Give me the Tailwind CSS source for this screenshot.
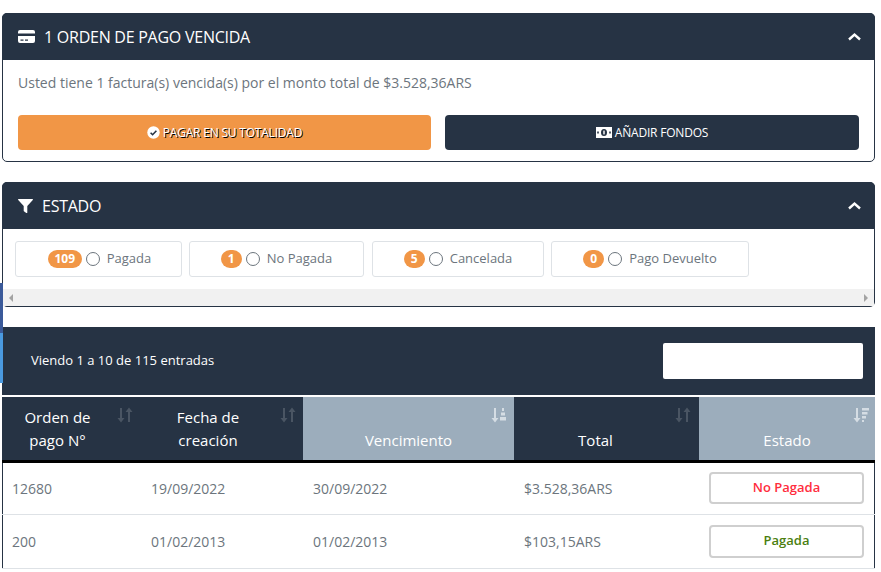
<!DOCTYPE html>
<html lang="es">
  <head>
    <meta charset="UTF-8" />
    <title>Facturas</title>
    <script src="https://cdn.jsdelivr.net/npm/@tailwindcss/browser@4"></script>
  </head>
  <body class="relative h-[572px] overflow-hidden bg-white font-['Open_Sans',sans-serif] text-[#6c757d]">
    <!-- tira lateral -->
    <div class="absolute left-0 top-[283px] h-[50px] w-[3px] bg-[#3b5a9a]"></div>
    <div class="absolute left-0 top-[333px] h-[50px] w-[3px] bg-[#4a9ae0]"></div>

    <div class="pl-[2px] pr-[6px] pt-[13px]">
      <!-- orden vencida -->
      <section class="h-[149px] rounded-[5px] border border-[#263344]">
        <header class="-m-px flex h-[47px] items-center rounded-t-[5px] bg-[#263344] pl-[16px] pr-[14px] text-white">
          <svg class="h-[15px] w-[17px]" viewBox="0 0 17 15" fill="#fff"><path d="M2 1h13a2 2 0 0 1 2 2v1.5H0V3a2 2 0 0 1 2-2zM0 7h17v5a2 2 0 0 1-2 2H2a2 2 0 0 1-2-2zm2.5 3.5v1.3h3v-1.3zm4.5 0v1.3h3v-1.3z"/></svg>
          <h2 class="ml-[9px] text-[16px] leading-none tracking-[-0.25px]">1 ORDEN DE PAGO VENCIDA</h2>
          <svg class="ml-auto h-[9px] w-[13px]" viewBox="0 0 13 9" fill="none" stroke="#fff" stroke-width="2.4"><path d="M1 7.5l5.5-5 5.5 5"/></svg>
        </header>
        <div class="px-[15px] pt-[14px]">
          <p class="text-[14px] leading-[19px]">Usted tiene 1 factura(s) vencida(s) por el monto total de $3.528,36ARS</p>
          <div class="mt-[23px] flex gap-[14px]">
            <button class="flex h-[35px] w-[413px] items-center justify-center gap-[3px] rounded-[4px] bg-[#f19646] text-[12px] tracking-[-0.2px] text-white [text-shadow:1px_1px_0_#000]">
              <svg class="h-[13px] w-[13px]" viewBox="0 0 13 13"><circle cx="6.5" cy="6.5" r="6.2" fill="#fff"/><path d="M3.6 6.7l2 2 3.8-3.9" fill="none" stroke="#263344" stroke-width="1.6"/></svg>
              PAGAR EN SU TOTALIDAD
            </button>
            <button class="flex h-[35px] w-[414px] items-center justify-center gap-[3px] rounded-[4px] bg-[#263344] text-[12px] tracking-[-0.2px] text-white">
              <svg class="h-[11px] w-[16px]" viewBox="0 0 16 11"><rect width="16" height="11" fill="#fff"/><ellipse cx="8" cy="5.5" rx="3" ry="3.6" fill="#263344"/><rect x="7.3" y="3.6" width="1.4" height="3.8" fill="#fff"/><path d="M1.2 4.5h1.6v2H1.2zM13.2 4.5h1.6v2h-1.6z" fill="#263344"/></svg>
              AÑADIR FONDOS
            </button>
          </div>
        </div>
      </section>

      <!-- estado -->
      <section class="mt-[20px] h-[125px] rounded-[5px] border border-[#263344]">
        <header class="-m-px flex h-[47px] items-center rounded-t-[5px] bg-[#263344] pl-[16px] pr-[14px] text-white">
          <svg class="h-[14px] w-[15px]" viewBox="0 0 15 14" fill="#fff"><path d="M.6 0h13.8c.5 0 .8.6.4 1L9.3 7v6.4c0 .5-.6.8-1 .5L5.9 12.200a.6.6 0 0 1-.2-.5V7L.2 1C-.2.6.1 0 .6 0z"/></svg>
          <h2 class="ml-[9px] text-[16px] leading-none tracking-[-0.25px]">ESTADO</h2>
          <svg class="ml-auto h-[9px] w-[13px]" viewBox="0 0 13 9" fill="none" stroke="#fff" stroke-width="2.4"><path d="M1 7.5l5.500-5 5.500 5"/></svg>
        </header>
        <div class="flex pl-[12px] pt-[13px]">
          <label class="flex h-[36px] w-[167px] items-center justify-center rounded-[3px] border border-[#dee2e6] pl-[2px] text-[13px]">
            <span class="flex h-[18px] w-[34px] items-center justify-center rounded-full bg-[#f19646] text-[12px] font-bold text-white">109</span>
            <span class="ml-[4px] mr-[7px] h-[14px] w-[14px] rounded-full border-[1.5px] border-[#6c757d]"></span>
            Pagada
          </label>
          <label class="ml-[7px] flex h-[36px] w-[175px] items-center justify-center rounded-[3px] border border-[#dee2e6] text-[13px]">
            <span class="flex h-[18px] w-[21px] items-center justify-center rounded-full bg-[#f19646] text-[12px] font-bold text-white">1</span>
            <span class="ml-[4px] mr-[7px] h-[14px] w-[14px] rounded-full border-[1.5px] border-[#6c757d]"></span>
            No Pagada
          </label>
          <label class="ml-[8px] flex h-[36px] w-[172px] items-center justify-center rounded-[3px] border border-[#dee2e6] text-[13px]">
            <span class="flex h-[18px] w-[21px] items-center justify-center rounded-full bg-[#f19646] text-[12px] font-bold text-white">5</span>
            <span class="ml-[4px] mr-[7px] h-[14px] w-[14px] rounded-full border-[1.5px] border-[#6c757d]"></span>
            Cancelada
          </label>
          <label class="ml-[7px] flex h-[36px] w-[198px] items-center justify-center rounded-[3px] border border-[#dee2e6] text-[13px]">
            <span class="flex h-[18px] w-[21px] items-center justify-center rounded-full bg-[#f19646] text-[12px] font-bold text-white">0</span>
            <span class="ml-[4px] mr-[7px] h-[14px] w-[14px] rounded-full border-[1.5px] border-[#6c757d]"></span>
            Pago Devuelto
          </label>
        </div>
        <div class="mt-[12px] flex h-[17px] items-center justify-between bg-[#f1f1f1] px-[6px]">
          <span class="h-0 w-0 border-y-[4px] border-r-[4px] border-y-transparent border-r-[#a3a3a3]"></span>
          <span class="h-0 w-0 border-y-[4px] border-l-[4px] border-y-transparent border-l-[#a3a3a3]"></span>
        </div>
      </section>

      <!-- barra tabla -->
      <div class="mt-[20px] flex h-[68px] items-center justify-between bg-[#263344] pl-[29px] pr-[12px] text-[13px] text-white">
        <span>Viendo 1 a 10 de 115 entradas</span>
        <input class="h-[36px] w-[200px] rounded-[2px] bg-white" />
      </div>

      <!-- tabla -->
      <div class="mt-[2px] border-x border-[#263344]">
        <table class="-mx-px w-[873px] table-fixed border-collapse text-[14px]">
          <colgroup>
            <col class="w-[139px]" /><col class="w-[162px]" /><col class="w-[211px]" /><col class="w-[185px]" /><col class="w-[176px]" />
          </colgroup>
          <thead>
            <tr class="h-[64px] border-b-[3px] border-black text-center align-bottom text-white">
              <th class="relative bg-[#263344] pb-[8px] pl-[6px] pr-[34px] text-[15px] font-normal leading-[23px]">
                Orden de pago N°
                <svg class="absolute right-[8px] top-[10px] h-[16px] w-[16px]" viewBox="0 0 16 16" fill="#4a5563"><path d="M5 1v10h2.500L4 15.500.5 11H3V1zM11 15V5H8.500L12 .5 15.500 5H13v10z"/></svg>
              </th>
              <th class="relative bg-[#263344] pb-[8px] pl-[6px] pr-[34px] text-[15px] font-normal leading-[23px]">
                Fecha de creación
                <svg class="absolute right-[7px] top-[10px] h-[16px] w-[16px]" viewBox="0 0 16 16" fill="#4a5563"><path d="M5 1v10h2.500L4 15.500.5 11H3V1zM11 15V5H8.500L12 .5 15.500 5H13v10z"/></svg>
              </th>
              <th class="relative bg-[#9cadbc] pb-[8px] text-[15px] font-normal leading-[23px]">
                Vencimiento
                <svg class="absolute right-[7px] top-[10px] h-[16px] w-[16px]" viewBox="0 0 16 16" fill="#d5dde4"><path d="M5 1v10h2.500L4 15.500.5 11H3V1zM11 1h2v3h-2zM10 5.500h4v3h-4zM9 10h6v3.500H9z"/></svg>
              </th>
              <th class="relative bg-[#263344] pb-[8px] pr-[22px] text-[15px] font-normal leading-[23px]">
                Total
                <svg class="absolute right-[8px] top-[10px] h-[16px] w-[16px]" viewBox="0 0 16 16" fill="#4a5563"><path d="M5 1v10h2.500L4 15.500.5 11H3V1zM11 15V5H8.500L12 .5 15.500 5H13v10z"/></svg>
              </th>
              <th class="relative bg-[#9cadbc] pb-[8px] text-[15px] font-normal leading-[23px]">
                Estado
                <svg class="absolute right-[6px] top-[10px] h-[16px] w-[16px]" viewBox="0 0 16 16" fill="#d5dde4"><path d="M5 1v10h2.500L4 15.500.5 11H3V1zM9 1h7v2.500H9zM9 5h5.500v2.500H9zM9 9h4v2.500H9zM9 13h2v2H9z"/></svg>
              </th>
            </tr>
          </thead>
          <tbody>
            <tr class="h-[53px] border-b border-[#dee2e6]">
              <td class="pl-[10px]">12680</td>
              <td class="pl-[10px]">19/09/2022</td>
              <td class="pl-[10px]">30/09/2022</td>
              <td class="pl-[10px]">$3.528,36ARS</td>
              <td class="pl-[10px]"><span class="flex h-[32px] w-[155px] items-center justify-center rounded-[4px] border-2 border-[#cfcfcf] text-[13px] font-semibold text-[#ff2d3d]">No Pagada</span></td>
            </tr>
            <tr class="h-[54px] border-b border-[#dee2e6]">
              <td class="pl-[10px]">200</td>
              <td class="pl-[10px]">01/02/2013</td>
              <td class="pl-[10px]">01/02/2013</td>
              <td class="pl-[10px]">$103,15ARS</td>
              <td class="pl-[10px]"><span class="flex h-[33px] w-[155px] items-center justify-center rounded-[4px] border-2 border-[#cfcfcf] text-[13px] font-semibold text-[#4b7f10]">Pagada</span></td>
            </tr>
          </tbody>
        </table>
      </div>
    </div>
  </body>
</html>
